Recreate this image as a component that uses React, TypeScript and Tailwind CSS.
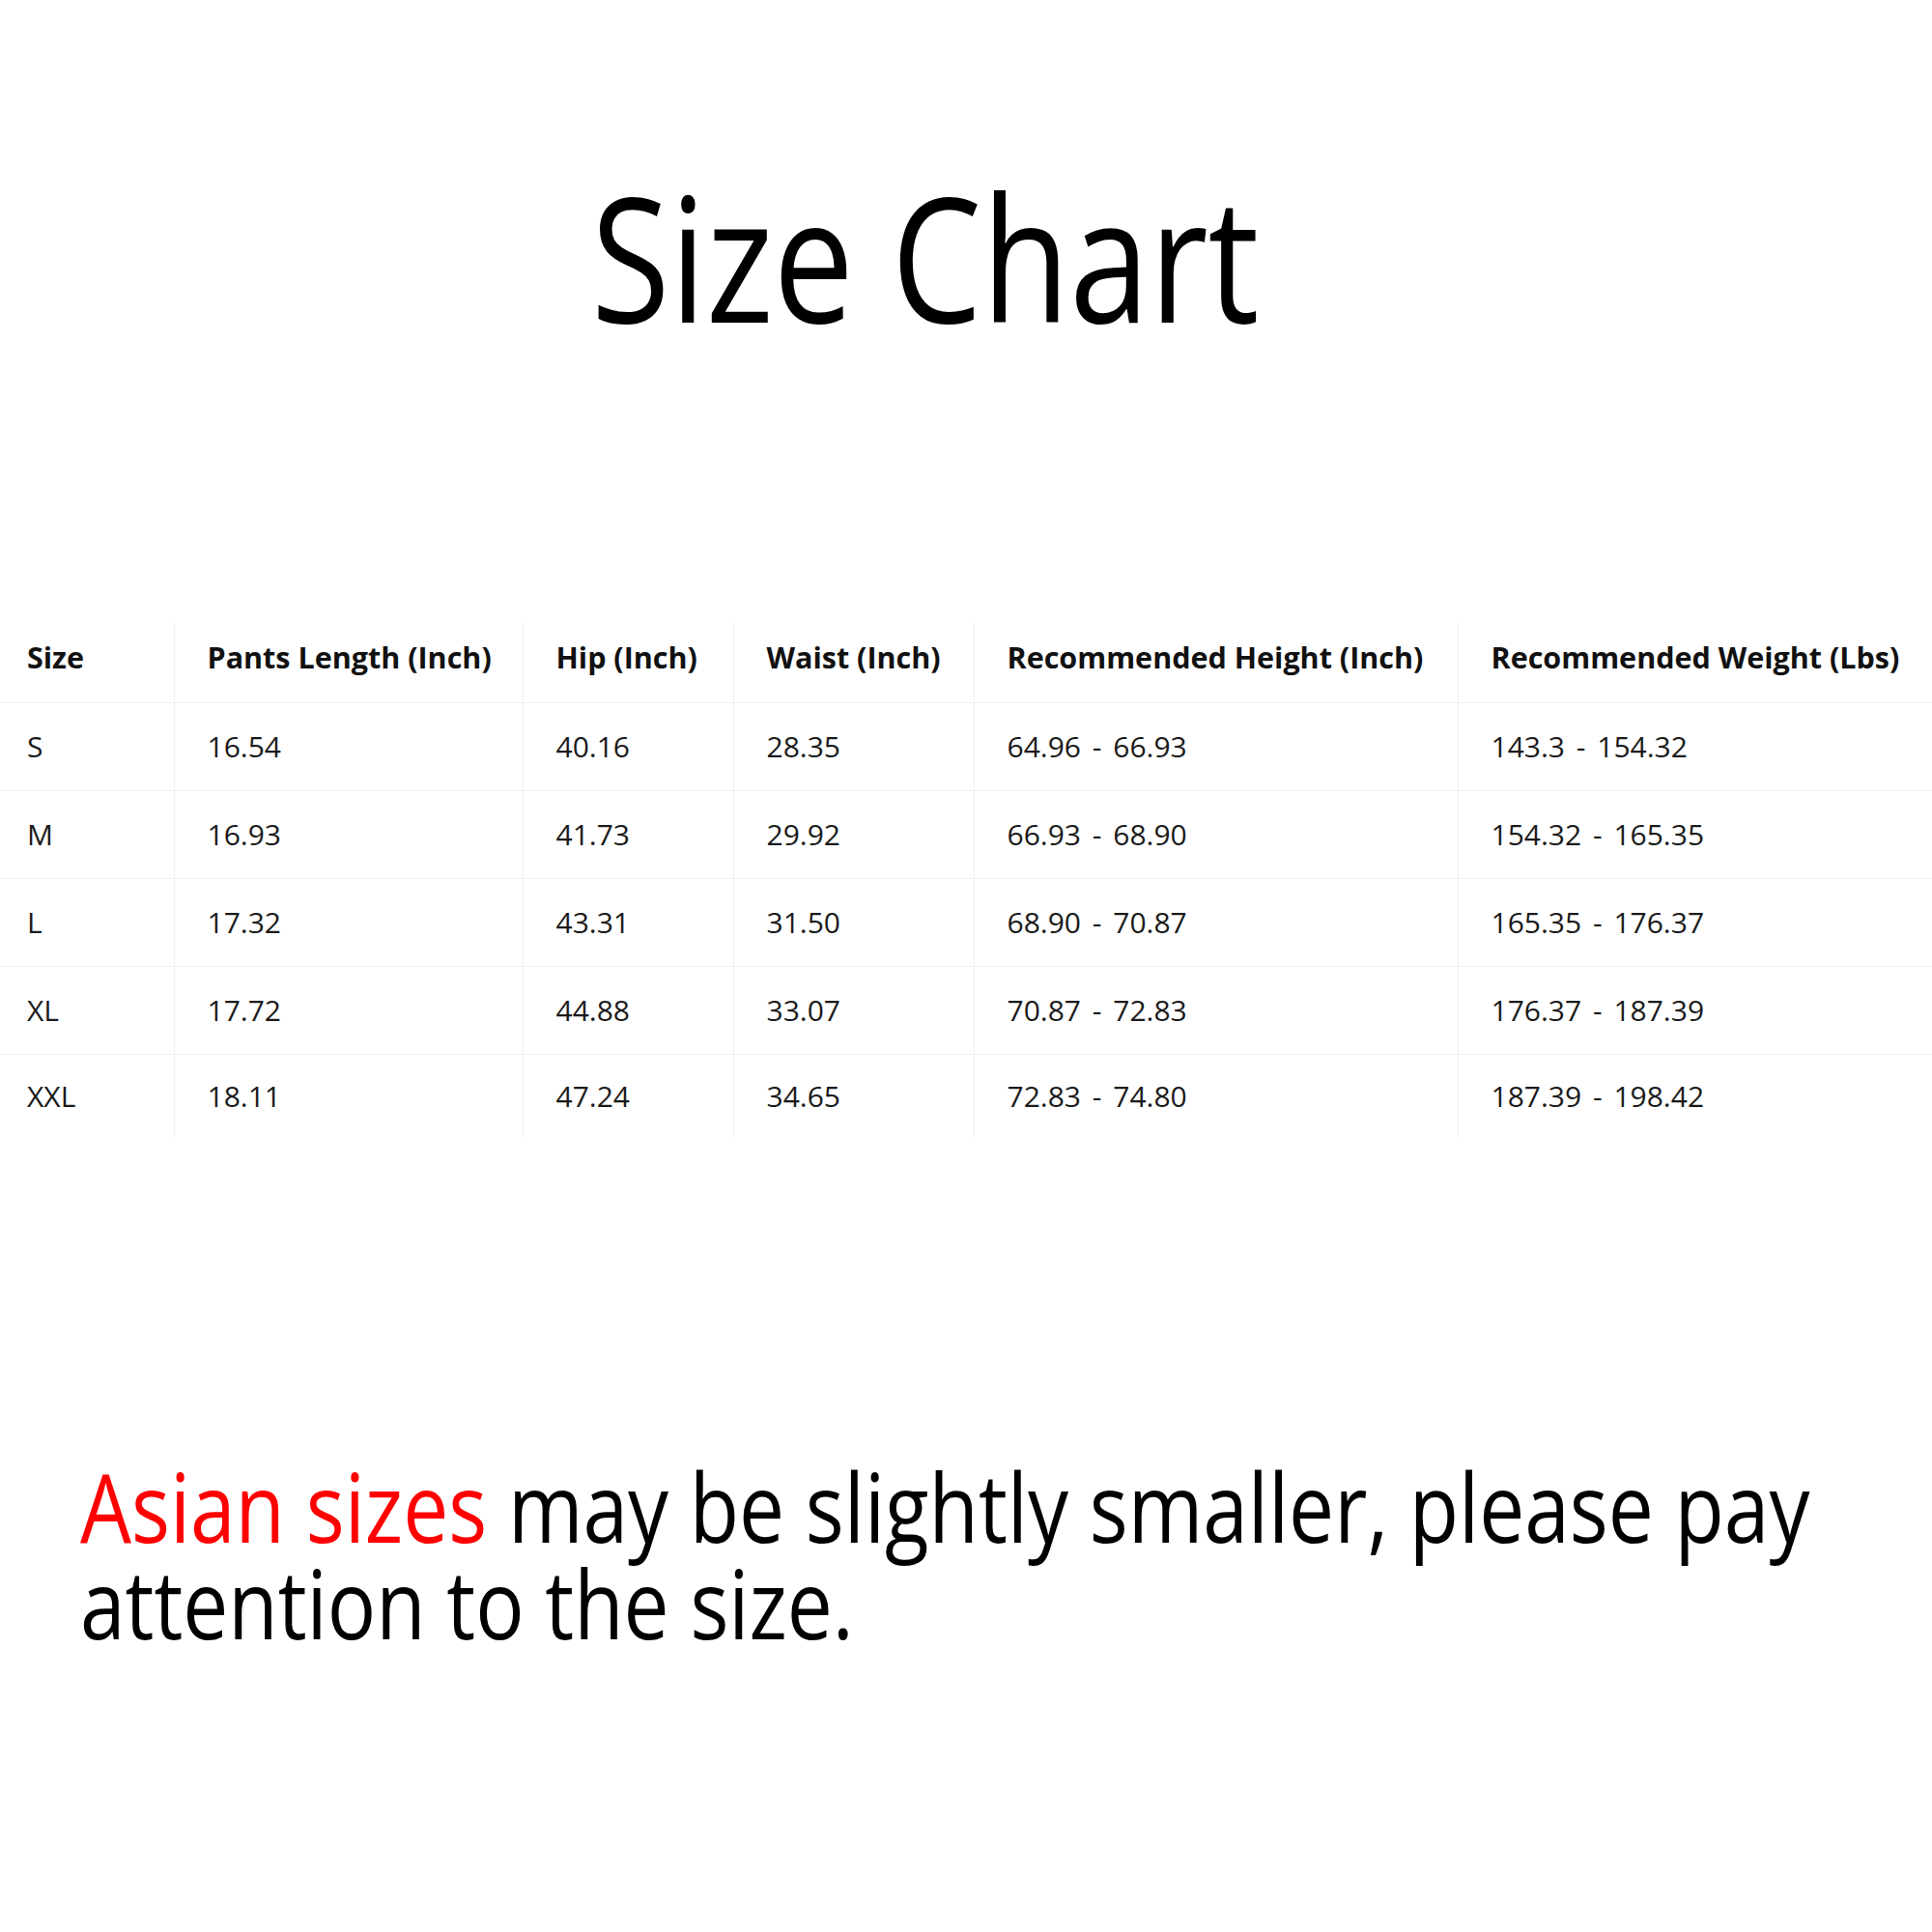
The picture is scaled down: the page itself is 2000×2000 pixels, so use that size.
import React from "react";

const rows = [
  ["S", "16.54", "40.16", "28.35", "64.96 - 66.93", "143.3 - 154.32"],
  ["M", "16.93", "41.73", "29.92", "66.93 - 68.90", "154.32 - 165.35"],
  ["L", "17.32", "43.31", "31.50", "68.90 - 70.87", "165.35 - 176.37"],
  ["XL", "17.72", "44.88", "33.07", "70.87 - 72.83", "176.37 - 187.39"],
  ["XXL", "18.11", "47.24", "34.65", "72.83 - 74.80", "187.39 - 198.42"],
];

const headers = [
  "Size",
  "Pants Length (Inch)",
  "Hip (Inch)",
  "Waist (Inch)",
  "Recommended Height (Inch)",
  "Recommended Weight (Lbs)",
];

const widths = ["w-[180px]", "w-[361px]", "w-[218px]", "w-[249px]", "w-[501px]", "w-[491px]"];

export default function App() {
  return (
    <div
      className="w-[2000px] h-[2000px] bg-white text-black overflow-hidden"
      style={{ fontFamily: '"Open Sans", "Noto Sans", sans-serif' }}
    >
      <div className="pt-[175px] pl-[612px]">
        <h1 className="text-[179px] leading-[179px] font-normal whitespace-nowrap origin-left scale-x-[0.83]">
          Size Chart
        </h1>
      </div>

      <table className="mt-[291px] border-collapse table-fixed w-[2000px]">
        <colgroup>
          {widths.map((w, i) => (
            <col key={i} className={w} />
          ))}
        </colgroup>
        <thead>
          <tr className="h-[82px] border-b border-[#efefef]">
            {headers.map((h, i) => (
              <th
                key={i}
                className={`text-left font-bold text-[30.5px] text-[#111] align-middle pb-[10px] ${
                  i === 0 ? "pl-[28px]" : "pl-[34px] border-l border-[#efefef]"
                }`}
              >
                {h}
              </th>
            ))}
          </tr>
        </thead>
        <tbody>
          {rows.map((r, ri) => (
            <tr
              key={ri}
              className={`${ri === rows.length - 1 ? "h-[86px]" : "h-[91px] border-b border-[#efefef]"}`}
            >
              {r.map((c, i) => (
                <td
                  key={i}
                  className={`text-[30px] text-[#1a1a1a] align-middle whitespace-pre [word-spacing:4px] ${
                    i === 0 ? "pl-[28px]" : "pl-[34px] border-l border-[#efefef]"
                  }`}
                >
                  {c}
                </td>
              ))}
            </tr>
          ))}
        </tbody>
      </table>

      <div className="mt-[332px] ml-[83px] text-[98px] leading-[100px] text-black whitespace-nowrap origin-left scale-x-[0.855]">
        <p>
          <span className="text-[#ff0000]">Asian sizes</span> may be slightly smaller, please pay
        </p>
        <p>attention to the size.</p>
      </div>
    </div>
  );
}
